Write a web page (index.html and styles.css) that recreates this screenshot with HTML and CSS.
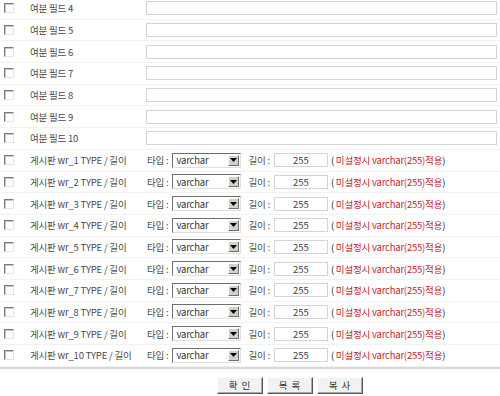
FILE: index.html
```html
<!DOCTYPE html>
<html>
  <head>
    <title>여분 필드 설정</title>
    <link rel="stylesheet" href="styles.css">
  </head>
  <body>

    <form class="board-form">
      <div class="field-list">
        <div class="row"><span class="c-chk"><input type="checkbox" class="chk"></span><span class="c-name">여분 필드 4</span><span class="c-val"><input type="text" class="txt wide"></span></div>
        <div class="row"><span class="c-chk"><input type="checkbox" class="chk"></span><span class="c-name">여분 필드 5</span><span class="c-val"><input type="text" class="txt wide"></span></div>
        <div class="row"><span class="c-chk"><input type="checkbox" class="chk"></span><span class="c-name">여분 필드 6</span><span class="c-val"><input type="text" class="txt wide"></span></div>
        <div class="row"><span class="c-chk"><input type="checkbox" class="chk"></span><span class="c-name">여분 필드 7</span><span class="c-val"><input type="text" class="txt wide"></span></div>
        <div class="row"><span class="c-chk"><input type="checkbox" class="chk"></span><span class="c-name">여분 필드 8</span><span class="c-val"><input type="text" class="txt wide"></span></div>
        <div class="row"><span class="c-chk"><input type="checkbox" class="chk"></span><span class="c-name">여분 필드 9</span><span class="c-val"><input type="text" class="txt wide"></span></div>
        <div class="row"><span class="c-chk"><input type="checkbox" class="chk"></span><span class="c-name">여분 필드 10</span><span class="c-val"><input type="text" class="txt wide"></span></div>
      </div>

      <div class="field-list" id="type-rows"></div>

      <div class="btn-bar">
        <button type="button" class="btn">확 인</button>
        <button type="button" class="btn">목 록</button>
        <button type="button" class="btn">복 사</button>
      </div>
    </form>

    <script>
      function buildTypeRows () {
        const list = document.getElementById('type-rows');
        let html = '';

        for (let i = 1; i <= 10; i++) {
          html += '<div class="row">' +
            '<span class="c-chk"><input type="checkbox" class="chk"></span>' +
            '<span class="c-name">게시판 wr_' + i + ' TYPE / 길이</span>' +
            '<span class="c-val">' +
              '<span class="lbl lbl-type">타입 :</span>' +
              '<span class="sel"><span class="sel-text">varchar</span><span class="sel-btn"><svg width="7" height="4" viewBox="0 0 7 4"><path d="M0 0h7L3.5 4z" fill="#000"/></svg></span></span>' +
              '<span class="lbl lbl-len">길이 :</span>' +
              '<input type="text" class="txt len" value="255">' +
              '<span class="hint">( <em>미설정시 varchar(255)적용</em>)</span>' +
            '</span>' +
          '</div>';
        }

        list.innerHTML = html;
      }

      buildTypeRows();
    </script>

  </body>
</html>
```

FILE: styles.css
```css
*,
*:before,
*:after {
  box-sizing: border-box;
}

body {
  margin: 0px;
  background: #fff;
  color: #4a4a4a;
  font-family: 'Noto Sans CJK KR', 'Noto Sans', sans-serif;
  font-size: 9.5px;
  letter-spacing: -0.2px;
}

.board-form {
  margin-top: -2px;
}

.row {
  display: grid;
  grid-template-columns: 30px 116px 1fr;
  align-items: center;
  height: 21.7px;
  border-bottom: 1px solid #f2f2f2;
}

.c-chk {
  display: flex;
  padding-left: 4px;
}

.c-name {
  white-space: nowrap;
}

.c-val {
  display: flex;
  align-items: center;
  padding-right: 3px;
  white-space: nowrap;
}

.chk {
  -webkit-appearance: none;
  appearance: none;
  display: block;
  width: 10px;
  height: 10px;
  margin: 0px;
  background: #fff;
  border: 1px solid;
  border-color: #7a7a7a #e4e4e4 #e4e4e4 #7a7a7a;
  box-shadow: inset 1px 1px 0 #c8c8c8;
}

.txt {
  height: 14px;
  margin: 0px;
  padding: 0px 2px;
  border: 1px solid #d4d4d4;
  background: #fff;
  font: inherit;
  color: #444;
}

.wide {
  width: 100%;
}

.lbl-type {
  padding-left: 1px;
  margin-right: 4px;
}
.lbl-len {
  margin-right: 4px;
}

.sel {
  display: inline-flex;
  align-items: center;
  justify-content: space-between;
  width: 69px;
  height: 15px;
  margin-right: 7px;
  padding: 0px 1px 0px 3px;
  border: 1px solid;
  border-color: #6e6e6e #e0e0e0 #e0e0e0 #6e6e6e;
  background: #fff;
  color: #333;
}

.sel-btn {
  display: inline-flex;
  align-items: center;
  justify-content: center;
  width: 11px;
  height: 11px;
  background: #d4d0c8;
  border: 1px solid;
  border-color: #fff #6e6e6e #6e6e6e #fff;
}

.len {
  width: 54px;
  margin-right: 3px;
  text-align: center;
}

.hint {
  color: #222;
}
.hint em {
  font-style: normal;
  color: #c0242b;
}

.btn-bar {
  display: flex;
  justify-content: center;
  gap: 4px;
  padding-top: 8px;
  padding-left: 80px;
  border-top: 2px solid #d8d8d8;
}

.btn {
  width: 46px;
  height: 17px;
  margin: 0px;
  padding: 0px;
  background: #f2f2f2;
  border: 1px solid;
  border-color: #fff #555 #555 #fff;
  box-shadow: inset -1px -1px 0 #aaa;
  font: inherit;
  color: #333;
  letter-spacing: 1px;
}
```
